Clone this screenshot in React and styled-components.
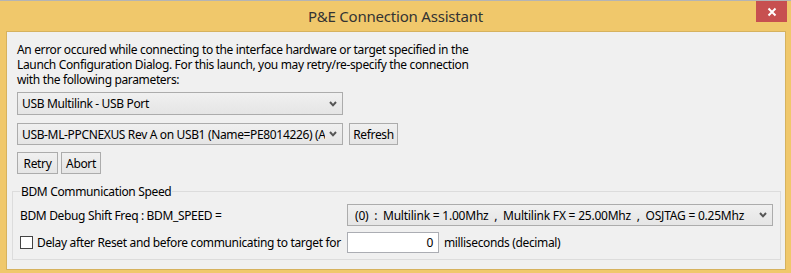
import React from "react";
import styled, { createGlobalStyle } from "styled-components";

const Global = createGlobalStyle`
  html, body {
    margin: 0;
    padding: 0;
    background: #f0c86b;
  }
  * {
    box-sizing: border-box;
  }
`;

const Chevron = () => (
  <svg width="8" height="6" viewBox="0 0 8 6">
    <path d="M1 1 L4 4.3 L7 1" fill="none" stroke="#555" strokeWidth="2" />
  </svg>
);

const App = () => {
  return (
    <>
      <Global />
      <Window>
        <TitleBar>
          <span />
          <Title>P&amp;E Connection Assistant</Title>
          <CloseButton>
            <svg width="10" height="10" viewBox="0 0 10 10">
              <path d="M1.5 1.5 L8.5 8.5 M8.5 1.5 L1.5 8.5" stroke="#fff" strokeWidth="2" />
            </svg>
          </CloseButton>
        </TitleBar>
        <Client>
          <Top>
            <Message>
              An error occured while connecting to the interface hardware or target specified in the
              <br />
              Launch Configuration Dialog. For this launch, you may retry/re-specify the connection
              <br />
              with the following parameters:
            </Message>
            <Combo $width={326} $height={23} $mt={5}>
              <ComboText>USB Multilink - USB Port</ComboText>
              <Chevron />
            </Combo>
            <Row $mt={8}>
              <Combo $width={326}>
                <ComboText>USB-ML-PPCNEXUS Rev A on USB1 (Name=PE8014226) (Auto)</ComboText>
                <Chevron />
              </Combo>
              <Button $width={49}>Refresh</Button>
            </Row>
            <Row $mt={7} $gap={3}>
              <Button $width={41}>Retry</Button>
              <Button $width={40}>Abort</Button>
            </Row>
          </Top>
          <Group>
            <Legend>BDM Communication Speed</Legend>
            <GroupGrid>
              <Label>BDM Debug Shift Freq : BDM_SPEED =</Label>
              <Combo $width={426}>
                <ComboText $pre>
                  {"(0)  :  Multilink = 1.00Mhz  ,  Multilink FX = 25.00Mhz  ,  OSJTAG = 0.25Mhz"}
                </ComboText>
                <Chevron />
              </Combo>
              <CheckLabel>
                <CheckBox />
                Delay after Reset and before communicating to target for
              </CheckLabel>
              <Row $gap={5}>
                <NumInput>0</NumInput>
                <Label>milliseconds (decimal)</Label>
              </Row>
            </GroupGrid>
          </Group>
        </Client>
      </Window>
    </>
  );
};
export default App;

const Window = styled.div`
  width: 791px;
  height: 273px;
  display: flex;
  flex-direction: column;
  background: #f0c86b;
  border-top: 1px solid #b4b4b4;
  font-family: "Noto Sans", "Open Sans", sans-serif;
  font-size: 12px;
  letter-spacing: -0.35px;
  color: #000;
`;

const TitleBar = styled.div`
  height: 30px;
  flex-shrink: 0;
  display: grid;
  grid-template-columns: 1fr auto 1fr;
  align-items: center;
`;

const Title = styled.div`
  font-size: 15px;
  letter-spacing: -0.2px;
  color: #333;
  padding-bottom: 1px;
`;

const CloseButton = styled.div`
  justify-self: end;
  align-self: start;
  margin-right: 4px;
  width: 31px;
  height: 21px;
  background: #c75050;
  display: flex;
  align-items: center;
  justify-content: center;
`;

const Client = styled.div`
  flex: 1;
  margin: 0 5px 3px 6px;
  background: #f0f0f0;
  border: 1px solid #d6b25e;
  padding-top: 10px;
  display: flex;
  flex-direction: column;
`;

const Top = styled.div`
  padding-left: 10px;
  display: flex;
  flex-direction: column;
  align-items: flex-start;
`;

const Message = styled.div`
  line-height: 15px;
  height: 45px;
`;

const Row = styled.div`
  display: flex;
  align-items: center;
  gap: ${(p) => (p.$gap ?? 6)}px;
  margin-top: ${(p) => p.$mt || 0}px;
`;

const Combo = styled.div`
  width: ${(p) => p.$width}px;
  height: ${(p) => p.$height || 22}px;
  flex-shrink: 0;
  margin-top: ${(p) => p.$mt || 0}px;
  border: 1px solid #acacac;
  background: linear-gradient(#f0f0f0, #e5e5e5);
  display: flex;
  align-items: center;
  padding: 0 5px 0 4px;
  gap: 4px;
`;

const ComboText = styled.div`
  flex: 1;
  overflow: hidden;
  white-space: ${(p) => (p.$pre ? "pre" : "nowrap")};
  padding-left: ${(p) => (p.$pre ? 3 : 0)}px;
  letter-spacing: ${(p) => (p.$pre ? "-0.22px" : "inherit")};
`;

const Button = styled.div`
  width: ${(p) => p.$width}px;
  height: 22px;
  flex-shrink: 0;
  border: 1px solid #acacac;
  background: linear-gradient(#f0f0f0, #e5e5e5);
  display: flex;
  align-items: center;
  justify-content: center;
`;

const Group = styled.fieldset`
  margin: 10px 4px 0 5px;
  padding: 5px 7px 6px 7px;
  border: 1px solid #dcdcdc;
  min-width: 0;
`;

const Legend = styled.legend`
  padding: 0 1px;
  line-height: 15px;
`;

const GroupGrid = styled.div`
  display: grid;
  grid-template-columns: 327px 1fr;
  row-gap: 6px;
  align-items: center;
`;

const Label = styled.div`
  white-space: nowrap;
`;

const CheckLabel = styled.div`
  display: flex;
  align-items: center;
  gap: 4px;
  white-space: nowrap;
`;

const CheckBox = styled.div`
  width: 13px;
  height: 13px;
  flex-shrink: 0;
  border: 1px solid #444;
  background: #fff;
`;

const NumInput = styled.div`
  width: 92px;
  height: 21px;
  flex-shrink: 0;
  border: 1px solid #abadb3;
  background: #fff;
  text-align: right;
  padding-right: 5px;
  line-height: 19px;
`;
